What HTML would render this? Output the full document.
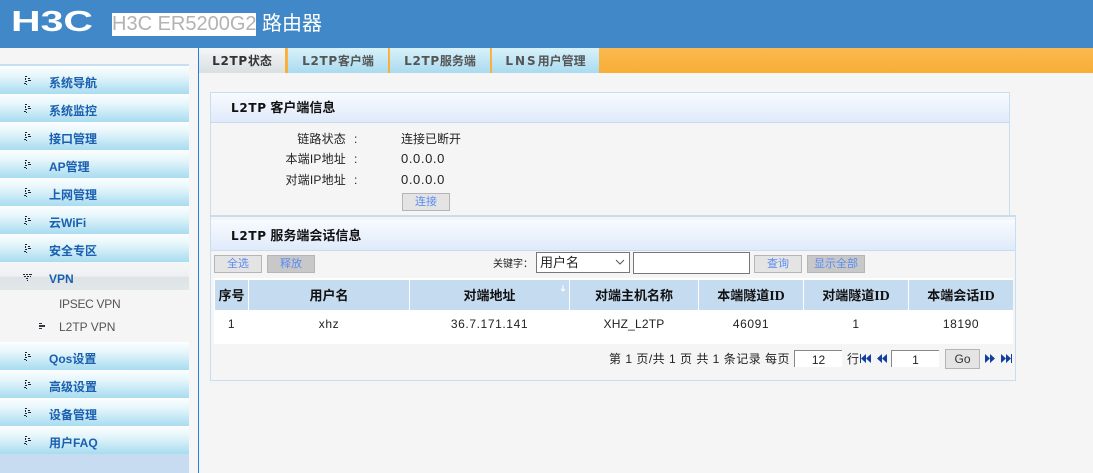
<!DOCTYPE html>
<html><head><meta charset="utf-8"><style>
html,body{margin:0;padding:0}
body{width:1093px;height:473px;overflow:hidden;position:relative;background:#f5f5f5;font-family:"Liberation Sans","Noto Sans CJK SC",sans-serif;font-size:12px;color:#222}
.a,.m,.tab,.th,.td,.l,.b{position:absolute;box-sizing:border-box}
.m{left:0;width:189px;height:28px;background:linear-gradient(#fcfeff 0,#e6f6fb 35%,#a8dcf0 100%);color:#1a5fb0;font-weight:bold;font-size:12px;line-height:35px;padding-left:49px}
.m svg{position:absolute;left:23px;top:10px}
.tab{top:48px;height:25px;background:linear-gradient(#d9f1f9,#a9dbf0);font-weight:bold;font-size:12px;line-height:27px;text-align:center;color:#555;border-right:1px solid #f8b03a;white-space:nowrap}
.w{font-family:"DejaVu Sans",sans-serif;font-weight:bold;font-size:12px;letter-spacing:.7px}
.ph{position:absolute;left:0;right:0;background:linear-gradient(#f8fbff,#dfeafa);border-bottom:1px solid #c5dcf2;font-weight:bold;font-size:13px;color:#111;padding-left:20px;box-sizing:border-box}
.th{top:280px;height:30px;background:#c5dbf0;font-weight:bold;font-size:13px;color:#111;text-align:center;line-height:31px}
.th span{font-family:"Liberation Serif",serif;font-size:14px}
.td{top:310px;height:28px;text-align:center;line-height:28px;color:#222;letter-spacing:.6px}
.l{text-align:right;width:136px;left:210px;font-size:12px;line-height:20px;letter-spacing:.2px}
.b{height:18px;background:#e4e4e4;border:1px solid #b5b5b5;color:#5b8cf0;text-align:center;font-size:11px;line-height:16px}
.i{position:absolute;background:#fff;box-sizing:border-box;border:1px solid #888;border-right:0;border-bottom:0;text-align:center;color:#222;line-height:18px}
</style></head><body>
<div class="a" style="left:0;top:0;width:1093px;height:48px;background:#4088c8"></div>
<svg class="a" style="left:0;top:0" width="110" height="48"><text x="11" y="31" font-family="Liberation Sans" font-weight="bold" font-size="29" fill="#fff" textLength="82" lengthAdjust="spacingAndGlyphs">H3C</text></svg>
<div class="a" style="left:112px;top:13px;width:144px;height:23px;background:#fff;color:#b3b3b3;font-size:20px;line-height:23px;white-space:nowrap">H3C ER5200G2</div>
<div class="a" style="left:262px;top:11px;color:#fff;font-size:20px;line-height:27px">路由器</div>

<div class="a" style="left:0;top:64px;width:189px;height:2px;background:#c8def2"></div>
<div class="m" style="top:66px"><svg width="12" height="12"><use href="#ic"/></svg>系统导航</div>
<div class="m" style="top:94px"><svg width="12" height="12"><use href="#ic"/></svg>系统监控</div>
<div class="m" style="top:122px"><svg width="12" height="12"><use href="#ic"/></svg>接口管理</div>
<div class="m" style="top:150px"><svg width="12" height="12"><use href="#ic"/></svg>AP管理</div>
<div class="m" style="top:178px"><svg width="12" height="12"><use href="#ic"/></svg>上网管理</div>
<div class="m" style="top:206px"><svg width="12" height="12"><use href="#ic"/></svg>云WiFi</div>
<div class="m" style="top:234px"><svg width="12" height="12"><use href="#ic"/></svg>安全专区</div>
<div class="m" style="top:262px;background:linear-gradient(#f5f6f7,#eef0f1 50%,#dde3e6 55%,#e2e7ea)"><svg width="12" height="12"><path d="M0 2h2v1H0zM3 2h2v1H3zM6 2h3v1H6zM1 4h2v1H1zM4 4h2v1H4zM7 4h1v1H7zM3 6h2v1H3zM4 8h1v1H4z" fill="#223"/></svg>VPN</div>
<div class="a" style="left:59px;top:294px;color:#555;line-height:20px;letter-spacing:-.3px">IPSEC VPN</div>
<div class="a" style="left:59px;top:317px;color:#555;line-height:20px">L2TP VPN</div>
<svg class="a" style="left:39px;top:323px" width="8" height="6"><path d="M0 0h3v1H0zM0 2h6v2H0zM0 5h3v1H0z" fill="#334"/></svg>
<div class="m" style="top:342px"><svg width="12" height="12"><use href="#ic"/></svg>Qos设置</div>
<div class="m" style="top:370px"><svg width="12" height="12"><use href="#ic"/></svg>高级设置</div>
<div class="m" style="top:398px"><svg width="12" height="12"><use href="#ic"/></svg>设备管理</div>
<div class="m" style="top:426px"><svg width="12" height="12"><use href="#ic"/></svg>用户FAQ</div>
<div class="a" style="left:0;top:454px;width:189px;height:19px;background:#c7dcf0"></div>
<svg width="0" height="0" style="position:absolute"><defs><g id="ic" fill="#223"><path d="M2 0h2v1H2zM2 2h1v2H2zM5 2h2v1H5zM2 5h2v1H2zM5 4h3v1H5zM1 7h2v1H1zM3 8h1v1H3z"/></g></defs></svg>

<div class="a" style="left:198px;top:48px;width:1px;height:425px;background:#1f7fe6"></div>

<div class="a" style="left:199px;top:48px;width:894px;height:25px;background:linear-gradient(#fbb950,#f8ae36)"></div>
<div class="tab" style="left:199px;width:88px;background:linear-gradient(#f5f6f7,#d9dfe2);color:#333;border-right:2px solid #f8b03a"><span class="w">L2TP</span>状态</div>
<div class="tab" style="left:288px;width:101px"><span class="w">L2TP</span>客户端</div>
<div class="tab" style="left:390px;width:101px"><span class="w">L2TP</span>服务端</div>
<div class="tab" style="left:492px;width:107px;border-right:0"><span class="w" style="letter-spacing:2px">LNS</span>用户管理</div>

<div class="a" style="left:210px;top:92px;width:800px;height:124px;border:1px solid #c9ddf0;border-bottom:0;box-sizing:border-box">
<div class="ph" style="top:0;height:30px;line-height:30px"><span class="w">L2TP</span> 客户端信息</div></div>
<div class="l" style="top:129px">链路状态</div>
<div class="l" style="top:149px">本端IP地址</div>
<div class="l" style="top:170px">对端IP地址</div>
<div class="a" style="left:354px;top:129px;line-height:20px">:</div>
<div class="a" style="left:354px;top:149px;line-height:20px">:</div>
<div class="a" style="left:354px;top:170px;line-height:20px">:</div>
<div class="a" style="left:401px;top:129px;line-height:20px">连接已断开</div>
<div class="a" style="left:401px;top:149px;line-height:20px;font-size:13px;letter-spacing:.6px">0.0.0.0</div>
<div class="a" style="left:401px;top:170px;line-height:20px;font-size:13px;letter-spacing:.6px">0.0.0.0</div>
<div class="b" style="left:402px;top:193px;width:48px">连接</div>

<div class="a" style="left:210px;top:215px;width:806px;height:166px;border:1px solid #c9ddf0;border-top-width:2px;box-sizing:border-box">
<div class="ph" style="top:3px;height:31px;line-height:32px"><span class="w">L2TP</span> 服务端会话信息</div></div>

<div class="b" style="left:214px;top:255px;width:48px">全选</div>
<div class="b" style="left:267px;top:255px;width:48px;background:#c8c8c8">释放</div>
<div class="a" style="left:493px;top:258px;font-size:10px;line-height:14px">关键字：</div>
<div class="a" style="left:536px;top:252px;width:94px;height:21px;background:#fff;border:1px solid #777;box-sizing:border-box;font-size:13px;line-height:19px;padding-left:3px;color:#222">用户名<svg class="a" style="right:4px;top:6px;left:auto" width="10" height="6"><path d="M1 1l4 4 4-4" fill="none" stroke="#555"/></svg></div>
<div class="a" style="left:633px;top:252px;width:117px;height:22px;background:#fff;border:1px solid #777;box-sizing:border-box"></div>
<div class="b" style="left:754px;top:255px;width:48px">查询</div>
<div class="b" style="left:807px;top:255px;width:58px;background:#c8c8c8">显示全部</div>

<div class="a" style="left:214px;top:278px;width:799px;height:66px;background:#fff"></div>
<div class="th" style="left:215px;width:33px">序号</div>
<div class="th" style="left:249px;width:160px">用户名</div>
<div class="th" style="left:410px;width:159px">对端地址<svg class="a" style="left:149px;top:5px" width="8" height="8"><path d="M4 0v6M2 4l2 2 2-2" fill="none" stroke="#fff"/></svg></div>
<div class="th" style="left:570px;width:128px">对端主机名称</div>
<div class="th" style="left:699px;width:104px">本端隧道<span>ID</span></div>
<div class="th" style="left:804px;width:104px">对端隧道<span>ID</span></div>
<div class="th" style="left:909px;width:104px">本端会话<span>ID</span></div>
<div class="td" style="left:215px;width:33px">1</div>
<div class="td" style="left:249px;width:160px">xhz</div>
<div class="td" style="left:410px;width:159px">36.7.171.141</div>
<div class="td" style="left:570px;width:128px;letter-spacing:.2px">XHZ_L2TP</div>
<div class="td" style="left:699px;width:104px">46091</div>
<div class="td" style="left:804px;width:104px">1</div>
<div class="td" style="left:909px;width:104px">18190</div>

<div class="a" style="left:609px;top:350px;line-height:18px;white-space:nowrap;font-size:12px;letter-spacing:.5px">第 1 页/共 1 页 共 1 条记录 每页</div>
<div class="i" style="left:794px;top:350px;width:48px;height:17px">12</div>
<div class="a" style="left:847px;top:350px;line-height:18px">行</div>
<svg class="a" style="left:860px;top:354px" width="155" height="10" fill="#123f9e"><path d="M0 0h1v9H0zM6 0v9L1 4.500zM11 0v9L6 4.500zM22 0v9L17 4.500zM27 0v9L22 4.500zM125 0v9l5-4.500zM130 0v9l5-4.500zM141 0v9l5-4.500zM146 0v9l5-4.500zM151 0h1v9h-1z"/></svg>
<div class="i" style="left:891px;top:350px;width:48px;height:17px">1</div>
<div class="b" style="left:945px;top:349px;width:35px;height:20px;color:#333;font-size:12px;line-height:18px">Go</div>
</body></html>
